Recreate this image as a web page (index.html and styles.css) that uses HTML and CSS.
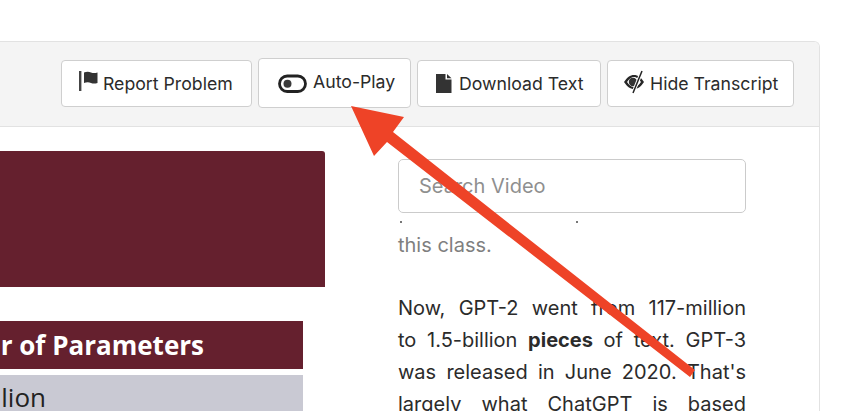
FILE: index.html
```html
<!DOCTYPE html>
<html lang="en">
<head>
<meta charset="utf-8">
<title>Video transcript</title>
<link rel="stylesheet" href="styles.css">
</head>
<body>
<div class="card">
  <div class="toolbar">
    <button class="btn report">
      <svg class="icon" width="19" height="20" viewBox="0 0 19 20"><rect x="0" y="0" width="2.400" height="20" fill="#444"/><path d="M5 1.500c2.500-1 5-1 7 0 2 .8 4 .8 6.500 0V12c-2.500.8-4.500.8-6.500 0-2-1-4.500-1-7 0z" fill="#333"/></svg>
      <span>Report Problem</span>
    </button>
    <button class="btn autoplay">
      <svg class="icon" width="29" height="20" viewBox="0 0 29 20"><rect x="1.500" y="2" width="26" height="15.500" rx="7.700" fill="none" stroke="#222" stroke-width="2.800"/><circle cx="9.500" cy="9.800" r="4" fill="#3a3a3a"/></svg>
      <span>Auto-Play</span>
    </button>
    <button class="btn download">
      <svg class="icon" width="16" height="19" viewBox="0 0 16 19"><path d="M0 0h9.500v5.500H15.500V19H0z" fill="#333"/><path d="M11 0l4.500 4.200H11z" fill="#333"/></svg>
      <span>Download Text</span>
    </button>
    <button class="btn hide">
      <svg class="icon" width="24" height="24" viewBox="0 -2 24 24"><path d="M1 10c3-4.500 6-7 10-7 4 0 7 2.500 10 7-3 4.500-6 7-10 7-4 0-7-2.500-10-7z" fill="#262626"/><path d="M4 10c2-3 4.500-5 7-5 2.500 0 5 2 7 5-2 3-4.500 5-7 5-2.500 0-5-2-7-5z" fill="#fff"/><circle cx="10" cy="10" r="4.200" fill="#333"/><path d="M19 -1L10 21" stroke="#fff" stroke-width="3.400"/><path d="M19 -1L10 21" stroke="#222" stroke-width="1.500"/></svg>
      <span>Hide Transcript</span>
    </button>
  </div>
  <div class="content">
    <div class="media">
      <div class="banner"></div>
      <div class="slide-head"><span>Number of Parameters</span></div>
      <div class="slide-row"><span>1.5 Billion</span></div>
    </div>
    <div class="transcript">
      <input class="search" type="text" placeholder="Search Video">
      <div class="clipped"><i></i><i></i></div>
      <p class="past">this class.</p>
      <p class="now">Now, GPT-2 went from 117-million<br>to 1.5-billion <b>pieces</b> of text. GPT-3<br>was released in June 2020. That's<br>largely what ChatGPT is based</p>
    </div>
  </div>
</div>
<svg class="arrow" width="850" height="411" viewBox="0 0 850 411"><path d="M351 106L404 117 393 132 695 370 690 377 387 142 374 156z" fill="#ee4327"/></svg>
</body>
</html>
```

FILE: styles.css
```css
html, body {
  margin: 0;
  height: 411px;
  overflow: hidden;
  background: #fff;
}
body {
  position: relative;
  font-family: "Inter", "Open Sans", sans-serif;
  color: #2b2b2b;
}
.card {
  box-sizing: border-box;
  width: 820px;
  height: 370px;
  margin-top: 41px;
  border: 1px solid #e2e2e2;
  border-left: 0;
  border-bottom: 0;
  border-top-right-radius: 6px;
  overflow: hidden;
}
.toolbar {
  box-sizing: border-box;
  height: 85px;
  padding: 0 25px 2px 0;
  display: flex;
  justify-content: flex-end;
  align-items: center;
  gap: 6px;
  background: #f4f4f4;
  border-bottom: 1px solid #e2e2e2;
}
.btn {
  box-sizing: border-box;
  height: 47px;
  display: flex;
  align-items: center;
  background: #fff;
  border: 1px solid #cfcfcf;
  border-radius: 4px;
  font: 17.700px "Inter", sans-serif;
  color: #2b2b2b;
  white-space: nowrap;
}
.report { width: 191px; padding-left: 17px; gap: 5px; }
.autoplay { width: 153px; height: 50px; padding: 0 0 3px 19px; gap: 6px; }
.download { width: 184px; padding-left: 18px; gap: 7px; }
.hide { width: 187px; padding-left: 15px; gap: 3px; }
.icon { flex: none; }
.report .icon { margin-top: -4px; }
.autoplay .icon { margin-top: 5px; }
.hide .icon { margin-top: -3px; }
.content {
  display: flex;
  height: 284px;
  overflow: hidden;
  background: #fff;
}
.media {
  width: 325px;
  flex: none;
  padding-top: 24px;
}
.banner {
  height: 136px;
  background: #65202e;
  border-radius: 0 3px 0 0;
}
.slide-head, .slide-row {
  width: 303px;
  display: flex;
  justify-content: flex-end;
  white-space: nowrap;
  overflow: hidden;
  box-sizing: border-box;
}
.slide-head {
  height: 48px;
  margin-top: 34px;
  padding-right: 99px;
  align-items: center;
  background: #65202e;
  color: #fff;
  font-family: "Open Sans", sans-serif;
  font-weight: 700;
  font-size: 26px;
}
.slide-row {
  height: 36px;
  margin-top: 6px;
  padding: 4px 257px 0 0;
  align-items: flex-start;
  background: #c9c9d3;
  color: #222;
  font-family: "Open Sans", sans-serif;
  font-size: 26px;
}
.transcript {
  margin-left: 73px;
  width: 348px;
  padding-top: 32px;
}
.search {
  box-sizing: border-box;
  display: block;
  width: 348px;
  height: 54px;
  padding: 0 20px;
  border: 1px solid #cbcbcb;
  border-radius: 5px;
  background: #fff;
  font: 20px "Inter", sans-serif;
}
.search::placeholder { color: #8f8f8f; }
.clipped {
  display: flex;
  gap: 174px;
  height: 3px;
  padding: 8px 0 0 2px;
}
.clipped i {
  width: 2px;
  height: 2px;
  background: #777;
}
.past, .now {
  margin: 0;
  font-size: 20px;
  line-height: 32px;
}
.past {
  margin-top: 5px;
  color: #7f7f7f;
}
.now {
  margin-top: 31px;
  color: #2b2b2b;
  text-align: justify;
  text-align-last: justify;
}
.arrow {
  position: absolute;
  left: 0;
  top: 0;
  pointer-events: none;
}
```
